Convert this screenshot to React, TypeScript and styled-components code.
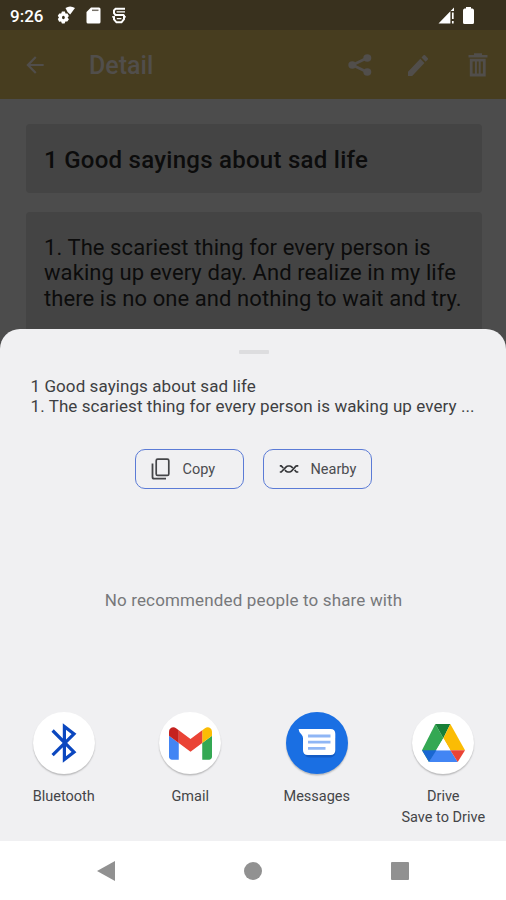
import React from 'react';
import styled, { createGlobalStyle } from 'styled-components';

const GlobalStyle = createGlobalStyle`
  * { box-sizing: border-box; }
  body { margin: 0; background: #fff; font-family: Roboto, sans-serif; }
  svg { display: block; flex: none; }
  h1, h2, p { margin: 0; font-weight: inherit; }
`;

const Phone = styled.div`
  position: relative;
  width: 506px;
  height: 900px;
  overflow: hidden;
  display: flex;
  flex-direction: column;
  background: #fff;
`;

const Backdrop = styled.div`
  height: 360px;
  flex: none;
  overflow: hidden;
  display: flex;
  flex-direction: column;
  background: #4c4c4c;
`;

const StatusBar = styled.header`
  height: 30px;
  flex: none;
  display: flex;
  justify-content: space-between;
  padding: 0 32px 0 10px;
  background: #39311e;
  color: #fff;
`;

const StatusGroup = styled.div<{ $gap: number }>`
  display: flex;
  align-items: center;
  gap: ${(p) => p.$gap}px;
`;

const Clock = styled.span`
  width: 35px;
  margin-right: 1px;
  padding-top: 2px;
  font-size: 17px;
  line-height: 20px;
  font-weight: 500;
  white-space: nowrap;
`;

const AppBar = styled.div`
  height: 68.5px;
  flex: none;
  display: flex;
  align-items: center;
  padding: 2px 18px 0 22px;
  background: #473d1f;
  color: #514e4b;
`;

const AppTitle = styled.h1`
  flex: 1;
  margin: 2px 0 0 41px;
  font-size: 25px;
  line-height: 30px;
  font-weight: 500;
`;

const Actions = styled.div`
  display: flex;
  align-items: center;
  gap: 36px;

  & > :last-child { margin-left: 4px; }
`;

const Content = styled.main`
  display: flex;
  flex-direction: column;
  gap: 19px;
  padding: 25.5px 24px 0 26px;
`;

const Card = styled.section<{ $height: number; $top: number }>`
  height: ${(p) => p.$height}px;
  flex: none;
  padding: ${(p) => p.$top}px 0 0 18px;
  border-radius: 4px;
  background: #444;
  color: #0c0c0c;
`;

const CardTitle = styled.h2`
  font-size: 24px;
  line-height: 30px;
  font-weight: 500;
  letter-spacing: 0.27px;
  white-space: nowrap;
`;

const CardText = styled.p`
  font-size: 22px;
  line-height: 25.7px;
  letter-spacing: 0.08px;
  white-space: nowrap;
`;

const Sheet = styled.section`
  position: absolute;
  top: 329px;
  left: 0;
  right: 0;
  height: 512px;
  display: flex;
  flex-direction: column;
  align-items: center;
  border-radius: 20px 20px 0 0;
  background: #f0f0f2;
  color: #444548;
`;

const Handle = styled.div`
  width: 30px;
  height: 4px;
  flex: none;
  margin: 20.5px 0 0 1px;
  border-radius: 1px;
  background: #dddddf;
`;

const Preview = styled.div`
  align-self: stretch;
  height: 41px;
  margin: 22px 0 0 30.5px;
  font-size: 17px;
  line-height: 20.4px;
  letter-spacing: 0.08px;
  white-space: nowrap;
  color: #3e3f42;
`;

const ButtonRow = styled.div`
  display: flex;
  gap: 19px;
  margin: 32.5px 0 0 1px;
`;

const SheetButton = styled.button`
  width: 109px;
  height: 40px;
  display: flex;
  align-items: center;
  gap: 12px;
  padding: 0 0 0 14.5px;
  border: 1.5px solid #5b7bd6;
  border-radius: 10px;
  background: transparent;
  color: #4b4c50;
  font: 14.5px Roboto, sans-serif;
`;

const Empty = styled.p`
  margin: 100.5px 0 0 1px;
  font-size: 17px;
  line-height: 20px;
  letter-spacing: 0.15px;
  color: #77787b;
  white-space: nowrap;
`;

const Targets = styled.div`
  align-self: stretch;
  display: grid;
  grid-template-columns: repeat(4, 126.5px);
  margin: 102.5px 0 0 0.5px;
`;

const Target = styled.div`
  display: flex;
  flex-direction: column;
  align-items: center;
  font-size: 14.5px;
  line-height: 20.5px;
  white-space: nowrap;
`;

const Disc = styled.div<{ $color: string }>`
  width: 62px;
  height: 62px;
  margin-bottom: 13px;
  display: grid;
  place-items: center;
  border-radius: 50%;
  background: ${(p) => p.$color};
  box-shadow: 0 1.5px 1.5px rgba(0, 0, 0, 0.22);
`;

const NavBar = styled.nav`
  height: 59px;
  flex: none;
  margin-top: auto;
  display: flex;
  justify-content: space-between;
  align-items: center;
  padding: 0 97px;
  color: #919191;
`;

const GearIcon = () => (
  <svg width="18" height="18" viewBox="0 0 18 18" fill="currentColor">
    <path d="M8.5 2Q13 -1 18 2L13.2 8.4L10.5 6Z" />
    <path d="M4.9 5.6h3l.6 1.9 2-.1 1.4 2.5-1.3 1.6 1.3 1.7-1.6 2.4-1.9-.1-.8 1.9H4.9l-.8-1.8-2 .1L.8 13.1l1.2-1.6L.8 9.7l1.5-2.3 1.9.1Z" />
    <ellipse cx="6.4" cy="11.5" rx="1.4" ry="1.8" fill="#39311e" />
  </svg>
);

const SdIcon = () => (
  <svg width="15" height="17" viewBox="0 0 15 17">
    <path d="M5 .5H13Q14.5.5 14.5 2V15Q14.5 16.5 13 16.5H2Q.5 16.5.5 15V5Z" fill="#fff" />
    <path d="M6 3.3h6.5" stroke="#777269" strokeWidth="1.5" />
  </svg>
);

const DebugIcon = () => (
  <svg width="14" height="17" viewBox="0 0 14 17" fill="none" stroke="#fff" strokeWidth="2">
    <path d="M13 1.7H3.6L2 3.4V6.2L3.4 7.9H11.4L12 8.6V12.2L9.5 15.3H4.5L2 12.4V9.6" />
    <path d="M4.6 4.8H13M0 9.8H3M11 9.8H14M4.8 11.6H9.4" strokeWidth="1.3" />
  </svg>
);

const SignalIcon = () => (
  <svg width="17" height="17" viewBox="0 0 17 17">
    <path d="M.5 16.5L16 .5V4H12.4V16.5Z" fill="#fff" />
    <path d="M14.8 5.5V12M14.8 14V16.5" stroke="#fff" strokeWidth="1.7" />
  </svg>
);

const BatteryIcon = () => (
  <svg width="11" height="17" viewBox="0 0 11 17" fill="#fff">
    <path d="M3 0H8V1.5H9.5Q11 2 11 3.5V15.5Q11 17 9.5 17H1.5Q0 17 0 15.5V3.5Q0 2 1.5 1.5H3Z" />
  </svg>
);

const BackIcon = () => (
  <svg width="26" height="26" viewBox="0 0 24 24" fill="currentColor">
    <path d="M20 11H7.83l5.59-5.59L12 4l-8 8 8 8 1.41-1.41L7.83 13H20v-2z" />
  </svg>
);

const ShareIcon = () => (
  <svg width="24" height="22" viewBox="0 0 24 22" fill="currentColor">
    <path d="M4.5 11L19 4M4.5 11L19 18" stroke="currentColor" strokeWidth="2.8" />
    <ellipse cx="4.3" cy="11" rx="4" ry="3.7" />
    <ellipse cx="19.3" cy="4" rx="4" ry="3.7" />
    <ellipse cx="19.3" cy="18" rx="4" ry="3.7" />
  </svg>
);

const EditIcon = () => (
  <svg width="20" height="21" viewBox="3 3 18 18" preserveAspectRatio="none" fill="currentColor">
    <path d="M3 17.25V21h3.75L17.81 9.94l-3.75-3.75L3 17.25zM20.71 7.04a1 1 0 0 0 0-1.41l-2.34-2.34a1 1 0 0 0-1.41 0l-1.83 1.83 3.75 3.75 1.83-1.83z" />
  </svg>
);

const TrashIcon = () => (
  <svg width="20" height="24" viewBox="0 0 20 24" fill="none" stroke="currentColor">
    <path d="M.5 3.3H19.5M6 1.5H14" strokeWidth="2.4" />
    <path d="M3.2 7.2H16.3V22H3.2Z" strokeWidth="2.8" />
    <path d="M7.9 8V21M11.7 8V21" strokeWidth="2" />
  </svg>
);

const CopyIcon = () => (
  <svg width="20" height="22" viewBox="0 0 20 22" fill="none" stroke="#444548">
    <rect x="5.2" y="1.2" width="12.6" height="16.2" rx="1.5" strokeWidth="1.7" />
    <path d="M1.5 5.5V19Q1.5 20.7 3 20.7H15" strokeWidth="1.8" />
  </svg>
);

const NearbyIcon = () => (
  <svg width="20" height="10" viewBox="0 0 20 10" fill="none" stroke="#333437" strokeWidth="1.7">
    <path d="M.8 1.8H2.2L4.3 4M6 6L7 7.2Q7.8 8 9 8H10.4Q11.6 8 12.4 7.2L16.4 2.6Q17 1.8 18 1.8H19.3" />
    <path d="M.8 8H2.2L7.2 2.8Q8 2 9.2 2H10.6Q11.8 2 12.6 2.8L13.8 4M15.6 6L17.4 8H19.3" />
  </svg>
);

const BluetoothIcon = () => (
  <svg width="26" height="40" viewBox="0 0 26 40" fill="none" stroke="#0b47bf" strokeWidth="3.2">
    <path d="M1.6 7.5L23 29L13.4 36.4V3.6L23 11L1.6 32.2" />
  </svg>
);

const GmailIcon = () => (
  <svg width="43" height="33" viewBox="52 42 88 66">
    <path fill="#4285f4" d="M58 108h14V74L52 59v43c0 3.32 2.69 6 6 6" />
    <path fill="#34a853" d="M120 108h14c3.32 0 6-2.69 6-6V59l-20 15" />
    <path fill="#fbbc04" d="M120 48v26l20-15v-8c0-7.42-8.47-11.65-14.4-7.2" />
    <path fill="#ea4335" d="M72 74V48l24 18 24-18v26L96 92" />
    <path fill="#c5221f" d="M52 51v8l20 15V48l-5.6-4.2c-5.94-4.45-14.4-.22-14.4 7.2" />
  </svg>
);

const MessagesIcon = () => (
  <svg width="38" height="30" viewBox="0 0 38 30">
    <path d="M4.5 10L5.5 24Q7 29.5 12 29.5H33Q38 28 37.5 23V10Z" fill="#125bc5" />
    <path d="M.6 1H32.5Q37.3 1 37.3 5.8V22.2Q37.3 27 32.5 27H9.8Q5 27 5 22.2V10Q5 8.2 3.5 6.6Q.6 3.6.6 1Z" fill="#fff" />
    <path d="M10 8H32.5M10 14.2H32.5M10 20.4H27.5" stroke="#8fb6f5" strokeWidth="2.8" />
  </svg>
);

const DriveIcon = () => (
  <svg width="43" height="38" viewBox="0 0 129 114">
    <path fill="#34a853" d="M40 0L64 43L21 114L0 79Z" />
    <path fill="#188038" d="M40 0H85L64 43Z" />
    <path fill="#fbbc04" d="M85 0L129 79H85L64 43Z" />
    <path fill="#4285f4" d="M21 114L40 79H85L107 114Z" />
    <path fill="#1967d2" d="M0 79H43L21 114Z" />
    <path fill="#ea4335" d="M85 79H129L107 114Z" />
    <path fill="#fff" d="M64 43L85 79H43Z" />
  </svg>
);

const targets = [
  { label: 'Bluetooth', color: '#fff', icon: <BluetoothIcon /> },
  { label: 'Gmail', color: '#fff', icon: <GmailIcon /> },
  { label: 'Messages', color: '#1a6fe3', icon: <MessagesIcon /> },
  { label: 'Drive', detail: 'Save to Drive', color: '#fff', icon: <DriveIcon /> },
];

export default function App() {
  return (
    <>
      <GlobalStyle />
      <Phone>
        <Backdrop>
          <StatusBar>
            <StatusGroup $gap={11}>
              <Clock>9:26</Clock>
              <GearIcon />
              <SdIcon />
              <DebugIcon />
            </StatusGroup>
            <StatusGroup $gap={8}>
              <SignalIcon />
              <BatteryIcon />
            </StatusGroup>
          </StatusBar>
          <AppBar>
            <BackIcon />
            <AppTitle>Detail</AppTitle>
            <Actions>
              <ShareIcon />
              <EditIcon />
              <TrashIcon />
            </Actions>
          </AppBar>
          <Content>
            <Card $height={69} $top={21}>
              <CardTitle>1 Good sayings about sad life</CardTitle>
            </Card>
            <Card $height={160} $top={22.5}>
              <CardText>1. The scariest thing for every person is</CardText>
              <CardText>waking up every day. And realize in my life</CardText>
              <CardText>there is no one and nothing to wait and try.</CardText>
            </Card>
          </Content>
        </Backdrop>
        <Sheet>
          <Handle />
          <Preview>
            <p>1 Good sayings about sad life</p>
            <p>1. The scariest thing for every person is waking up every ...</p>
          </Preview>
          <ButtonRow>
            <SheetButton><CopyIcon />Copy</SheetButton>
            <SheetButton><NearbyIcon />Nearby</SheetButton>
          </ButtonRow>
          <Empty>No recommended people to share with</Empty>
          <Targets>
            {targets.map((t) => (
              <Target key={t.label}>
                <Disc $color={t.color}>{t.icon}</Disc>
                <span>{t.label}</span>
                {t.detail && <span>{t.detail}</span>}
              </Target>
            ))}
          </Targets>
        </Sheet>
        <NavBar>
          <svg width="18" height="20" viewBox="0 0 18 20" fill="currentColor"><path d="M18 0V20L0 10Z" /></svg>
          <svg width="18" height="18" viewBox="0 0 18 18" fill="currentColor"><circle cx="9" cy="9" r="9" /></svg>
          <svg width="18" height="18" viewBox="0 0 18 18" fill="currentColor"><rect width="18" height="18" rx="1" /></svg>
        </NavBar>
      </Phone>
    </>
  );
}
